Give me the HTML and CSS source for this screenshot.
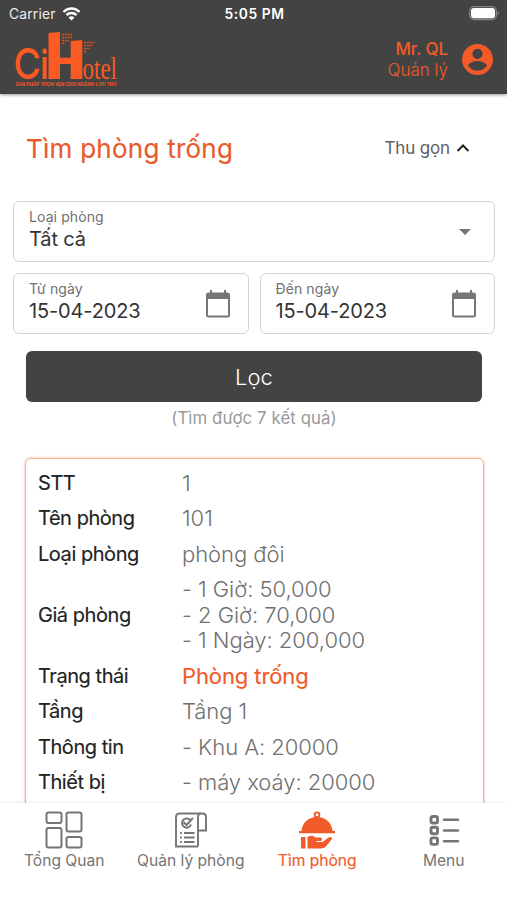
FILE: index.html
```html
<!DOCTYPE html>
<html lang="vi">
<head>
<meta charset="utf-8">
<meta name="viewport" content="width=device-width, initial-scale=1">
<title>Tìm phòng trống</title>
<link rel="stylesheet" href="styles.css">
</head>
<body>
<div class="app">
  <header class="header">
    <div class="status">
      <div class="carrier"><span>Carrier</span>
        <svg width="19" height="14" viewBox="0 0 18 14" fill="none" stroke="#fff" stroke-width="2.500"><path d="M1 5C5.500.4 12.500.4 17 5M4 8.200c2.800-2.800 7.200-2.800 10 0"/><path d="M9 13.500 6 10.500c1.700-1.600 4.300-1.600 6 0z" fill="#fff" stroke="none"/></svg>
      </div>
      <div class="clock">5:05 PM</div>
      <svg class="battery" width="31" height="15" viewBox="0 0 31 15"><rect x=".7" y=".7" width="26.600" height="12.800" rx="4" fill="none" stroke="#858585" stroke-width="1.300"/><rect x="2" y="2" width="24" height="10.200" rx="2.600" fill="#fff"/><path d="M28.500 5v4.500c2-1 2-3.500 0-4.500" fill="#858585"/></svg>
    </div>
    <div class="brandbar">
      <svg class="logo" width="104" height="58" viewBox="0 0 104 58" fill="#fb5a22">
        <text class="logo-c" transform="translate(-1.500 48) scale(.87 1)">C</text>
        <text class="logo-i" transform="translate(25.500 48) scale(.74 1)">i</text>
        <text class="logo-h" transform="translate(31.500 48) scale(.94 1)">H</text>
        <path d="M33.500 2 45 1v47H33.500zM55.700 10 67.300 9v39H55.700z"/>
        <text class="logo-otel" x="67.500" y="48" textLength="34.500" lengthAdjust="spacingAndGlyphs">otel</text>
        <path d="M47 3.500h11M47 6.500h10M47 9.500h7M47 12.500h3M69 11.500h11M69 14.500h9M69 17.500h6M69 20.500h3" stroke="#fb5a22" stroke-width="1.600" stroke-dasharray="2 .8" opacity=".8"/>
        <text class="logo-tag" x="0.500" y="54.500" textLength="101" lengthAdjust="spacingAndGlyphs">GIẢI PHÁP TRỌN VẸN CHO NGÀNH LƯU TRÚ</text>
      </svg>
      <div class="user">
        <div class="user-text"><b>Mr. QL</b><span>Quản lý</span></div>
        <svg width="37" height="37" viewBox="0 0 24 24" fill="#f35a27"><path d="M12 2a10 10 0 1 0 0 20 10 10 0 0 0 0-20zm0 3a3.300 3.300 0 1 1 0 6.600A3.300 3.300 0 0 1 12 5zm0 14.200a7.200 7.200 0 0 1-6-3.220c.03-1.990 4-3.080 6-3.080s5.970 1.090 6 3.080a7.200 7.200 0 0 1-6 3.220z"/></svg>
      </div>
    </div>
  </header>
  <main class="content">
    <div class="title-row"><h1>Tìm phòng trống</h1>
      <div class="toggle"><span>Thu gọn</span><svg width="14" height="10" viewBox="0 0 14 10" fill="none" stroke="#222" stroke-width="2"><path d="M1.500 8 7 2.500 12.500 8"/></svg></div>
    </div>
    <div class="fields">
      <div class="field wide"><div><label>Loại phòng</label><p class="choice">Tất cả</p></div><svg class="caret" width="12" height="6" viewBox="0 0 12 6"><path d="M0 0h12L6 6z" fill="#757575"/></svg></div>
      <div class="field"><div><label>Từ ngày</label><p>15-04-2023</p></div><svg class="cal" width="26" height="28" viewBox="0 0 26 28"><path d="M3.500 2.500h19A2.500 2.500 0 0 1 25 5v20a2.500 2.500 0 0 1-2.500 2.500h-19A2.500 2.500 0 0 1 1 25V5a2.500 2.500 0 0 1 2.500-2.500zM3 9v16.500h20V9z" fill="#757575" fill-rule="evenodd"/><path d="M6 0v4M20 0v4" stroke="#757575" stroke-width="2"/></svg></div>
      <div class="field"><div><label>Đến ngày</label><p>15-04-2023</p></div><svg class="cal" width="26" height="28" viewBox="0 0 26 28"><path d="M3.500 2.500h19A2.500 2.500 0 0 1 25 5v20a2.500 2.500 0 0 1-2.500 2.500h-19A2.500 2.500 0 0 1 1 25V5a2.500 2.500 0 0 1 2.500-2.500zM3 9v16.500h20V9z" fill="#757575" fill-rule="evenodd"/><path d="M6 0v4M20 0v4" stroke="#757575" stroke-width="2"/></svg></div>
    </div>
    <button class="filter">Lọc</button>
    <p class="count">(Tìm được 7 kết quả)</p>
    <dl class="card">
      <dt>STT</dt><dd>1</dd>
      <dt>Tên phòng</dt><dd>101</dd>
      <dt>Loại phòng</dt><dd>phòng đôi</dd>
      <dt>Giá phòng</dt><dd>- 1 Giờ: 50,000<br>- 2 Giờ: 70,000<br>- 1 Ngày: 200,000</dd>
      <dt>Trạng thái</dt><dd class="free">Phòng trống</dd>
      <dt>Tầng</dt><dd>Tầng 1</dd>
      <dt>Thông tin</dt><dd>- Khu A: 20000</dd>
      <dt>Thiết bị</dt><dd>- máy xoáy: 20000</dd>
    </dl>
  </main>
  <nav class="tabs">
    <a class="tab"><svg width="38" height="38" viewBox="0 0 38 38" fill="none" stroke="#757575" stroke-width="2"><rect x="1.500" y="1.500" width="15" height="10.500" rx="2"/><rect x="21.500" y="1.500" width="15" height="19" rx="2"/><rect x="1.500" y="17" width="15" height="19.500" rx="2"/><rect x="21.500" y="26" width="15" height="10.500" rx="2"/></svg><span>Tổng Quan</span></a>
    <a class="tab"><svg width="38" height="38" viewBox="0 0 38 38" fill="none" stroke="#757575" stroke-width="1.900"><path d="M26 35.500H4V6q0-3.500 3.500-3.500h23Q34 2.500 34 6v13.500h-8M26 35.500V6q0-3.500 3.500-3.500"/><path d="M18.500 9.500a4.600 4.600 0 1 0 .5 4M11.500 11l3 3 6.500-7" stroke-width="2"/><path d="M12 22h10.500M12 26.500h10.500M12 31h10.500" stroke-width="2"/><path d="M8 22h1.800M8 26.500h1.800M8 31h1.800" stroke-width="2"/></svg><span>Quản lý phòng</span></a>
    <a class="tab active"><svg width="38" height="38" viewBox="0 0 38 38" fill="#f15a29"><circle cx="19" cy="3.800" r="2.400" fill="none" stroke="#f15a29" stroke-width="1.800"/><path d="M3.500 20C4 12 10.500 6 19 6s15 6 15.500 14zM1 20h36v2.200H1zM3 26h4.500v11.500H3zM9.500 26c3-2 6-1.500 8 .5h5c2 0 2 3.500 0 3.500h-4v1h6l6-4.500c2-1.200 4.500-.2 3 2L28 35.500q-2 2-5 2H9.500z"/></svg><span>Tìm phòng</span></a>
    <a class="tab"><svg width="38" height="38" viewBox="0 0 38 38" fill="none" stroke="#757575" stroke-width="2.900"><rect x="6" y="5.500" width="6.500" height="6.500" rx="1.800"/><rect x="6" y="16.200" width="6.500" height="6.500" rx="1.800"/><rect x="6" y="26.900" width="6.500" height="6.500" rx="1.800"/><path d="M19 8.800h14M19 19.500h14M19 30.200h14" stroke-linecap="round" stroke-width="2.600"/></svg><span>Menu</span></a>
  </nav>
</div>
</body>
</html>
```
FILE: styles.css
```css
* { box-sizing: border-box; }
body { margin: 0; background: #fff; font-family: Inter, "Liberation Sans", sans-serif; color: #222; }
h1, p, dl, dd { margin: 0; }
svg { display: block; flex: none; }
.app { height: 900px; display: flex; flex-direction: column; overflow: hidden; }
.header { height: 94px; flex: none; background: #434343; box-shadow: 0 1px 3px #0006; }
.status { height: 27px; display: grid; grid-template-columns: 1fr auto 1fr; align-items: center; padding: 0 7px 0 9px; color: #fff; font-size: 13.800px; }
.carrier { display: flex; align-items: center; gap: 6px; letter-spacing: .2px; color: #eee; }
.clock { font-weight: 600; letter-spacing: .6px; }
.battery { justify-self: end; }
.brandbar { display: flex; justify-content: space-between; padding: 4px 11px 0 15px; }
.logo { overflow: visible; }
.logo-c { font: 500 43px/1 Inter, sans-serif; }
.logo-i { font: 600 40px/1 Inter, sans-serif; }
.logo-h { font: 700 50px/1 Inter, sans-serif; }
.logo-otel { font: 400 32px/1 "Liberation Serif", serif; }
.logo-tag { font: 700 4.500px/1 "Liberation Sans", sans-serif; }
.user { display: flex; align-items: center; gap: 11px; height: 57px; color: #f35a27; }
.user-text { display: flex; flex-direction: column; align-items: flex-end; font-size: 17px; line-height: 21px; }
.user-text b { font-weight: 500; letter-spacing: -.1px; }
.user-text span { font-weight: 300; }
.content { flex: 1; min-height: 0; overflow: hidden; padding: 0 12px 0 13px; }
.title-row { display: flex; justify-content: space-between; align-items: center; height: 107px; padding: 0 25px 0 13px; }
h1 { font-size: 26px; font-weight: 400; letter-spacing: .25px; color: #e85a2c; -webkit-text-stroke: .15px; padding-top: 1px; }
.toggle { display: flex; align-items: center; gap: 6px; color: #616161; font-size: 17px; letter-spacing: -.15px; }
.fields { display: grid; grid-template-columns: 1fr 1fr; gap: 11px; }
.field { height: 61px; border: 1.500px solid #d5d5d5; border-radius: 6px; display: flex; justify-content: space-between; align-items: center; padding: 0 17px 4px 15px; }
.cal { margin-top: 4px; }
.caret { margin-top: 5px; }
.wide { grid-column: 1 / -1; padding-right: 23px; }
.field label { display: block; font-size: 14px; line-height: 20px; letter-spacing: .1px; color: #707070; }
.field p { font-size: 20px; line-height: 25px; letter-spacing: -.15px; color: #333; }
.filter { display: block; width: 456px; height: 51px; margin: 17px 0 0 13px; border: 0; border-radius: 6px; background: #434343; color: #fff; font: 300 22px Inter, sans-serif; }
.count { text-align: center; font-size: 16.800px; line-height: 32px; letter-spacing: .1px; color: #999; }
.card { margin: 24px 11px 0 12px; height: 420px; border: 1.500px solid #f9b09a; border-radius: 6px; box-shadow: 0 0 3px #f15a2977; padding: 7px 12px; display: grid; grid-template-columns: 144px 1fr; align-content: start; align-items: center; font-size: 20px; line-height: 25.700px; }
.card dt, .card dd { padding: 4.850px 0; }
.card dt { letter-spacing: -.45px; -webkit-text-stroke: .15px; }
.card dd { color: #707070; font-weight: 300; font-size: 22px; letter-spacing: -.05px; }
.card .free { color: #f15a29; font-weight: 400; letter-spacing: -.1px; -webkit-text-stroke: .15px; }
.tabs { height: 97px; flex: none; display: grid; grid-template-columns: repeat(4, 1fr); background: #fff; box-shadow: 0 -1px 3px #00000010; position: relative; padding: 8px 0 0 1px; }
.tab { display: flex; flex-direction: column; align-items: center; color: #757575; font-size: 15.600px; line-height: 23px; }
.active { color: #f15a29; }
.active span { -webkit-text-stroke: .15px; }
```
